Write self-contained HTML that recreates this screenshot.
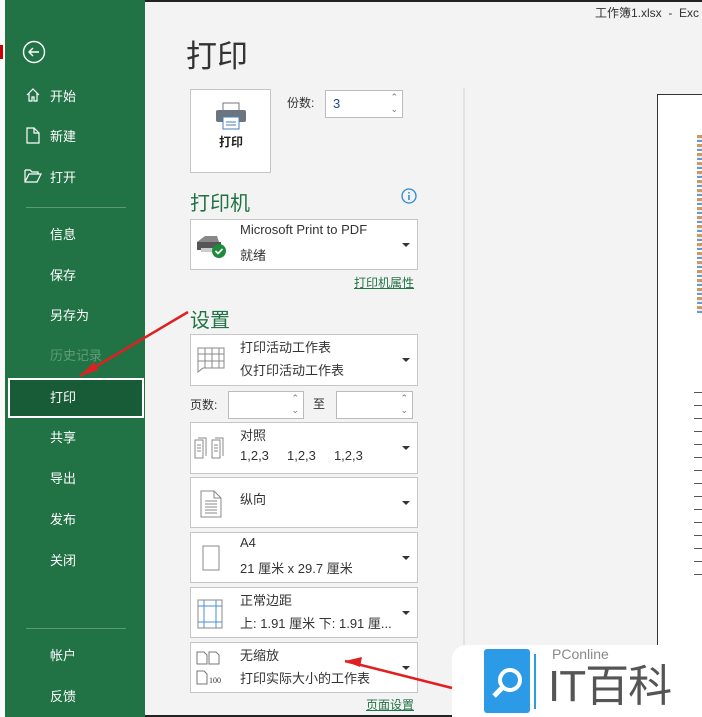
<!DOCTYPE html>
<html><head><meta charset="utf-8"><style>
*{margin:0;padding:0;box-sizing:border-box}
body{width:702px;height:717px;overflow:hidden;background:#f3f3f3;font-family:"Liberation Sans","Noto Sans CJK SC",sans-serif;position:relative;color:#333}
.a{position:absolute}
#side{left:5px;top:0;width:140px;height:717px;background:#217346}
.si{position:absolute;left:45px;color:#fff;font-size:13px}
.box{position:absolute;left:190px;width:228px;border:1px solid #c6c6c6;background:#fff}
.box .t1{position:absolute;left:49px;top:2px;font-size:13px;color:#333}
.box .t2{position:absolute;left:49px;top:25px;font-size:13px;color:#333}
.box .dd{position:absolute;right:7px;top:50%;margin-top:-2px;border-left:4px solid transparent;border-right:4px solid transparent;border-top:4px solid #333}
.gh{position:absolute;left:190px;color:#217346;font-size:20px}
.lk{position:absolute;color:#217346;font-size:12px;text-decoration:underline}
.sp{position:absolute;background:#fff;border:1px solid #bbb;height:28px}
.sp:after{content:"⌃\A⌄";white-space:pre;position:absolute;right:4px;top:0;font-size:9px;line-height:12px;color:#777}
</style></head><body>
<div class="a" style="left:0;top:0;width:702px;height:2px;background:#222"></div>
<div class="a" style="left:0;top:715px;width:702px;height:2px;background:#222"></div>
<div class="a" style="left:0;top:0;width:5px;height:717px;background:#fafafa"></div>
<div class="a" style="left:0;top:45px;width:3px;height:14px;background:#c00"></div>
<div id="side" class="a">
<svg class="a" style="left:17px;top:40px" width="24" height="24"><circle cx="12" cy="12" r="10.5" fill="none" stroke="#fff" stroke-width="1.4"/><path d="M17 12H7M11 8L7 12L11 16" fill="none" stroke="#fff" stroke-width="1.4"/></svg>
<svg class="a" style="left:20px;top:87px" width="16" height="16"><path d="M2 8L8 2L14 8M4 6V14H7V10H9V14H12V6" fill="none" stroke="#fff" stroke-width="1.2"/></svg>
<svg class="a" style="left:21px;top:127px" width="14" height="17"><path d="M1 1H8L13 6V16H1Z M8 1V6H13" fill="none" stroke="#fff" stroke-width="1.2"/></svg>
<svg class="a" style="left:19px;top:169px" width="18" height="14"><path d="M1 1H6L8 3H14V5M1 1V13H13L17 5H5L1 13" fill="none" stroke="#fff" stroke-width="1.2"/></svg>
<div class="si" style="top:86px">开始</div>
<div class="si" style="top:126px">新建</div>
<div class="si" style="top:167px">打开</div>
<div class="a" style="left:21px;top:207px;width:100px;height:1px;background:#5a9a75"></div>
<div class="si" style="top:224px">信息</div>
<div class="si" style="top:265px">保存</div>
<div class="si" style="top:305px">另存为</div>
<div class="si" style="top:345px;color:#5f9c78">历史记录</div>
<div class="a" style="left:3px;top:378px;width:136px;height:40px;background:#185c37;border:2px solid #fff"></div>
<div class="si" style="top:387px">打印</div>
<div class="si" style="top:427px">共享</div>
<div class="si" style="top:468px">导出</div>
<div class="si" style="top:509px">发布</div>
<div class="si" style="top:550px">关闭</div>
<div class="a" style="left:21px;top:628px;width:100px;height:1px;background:#5a9a75"></div>
<div class="si" style="top:645px">帐户</div>
<div class="si" style="top:686px">反馈</div>
</div>
<div class="a" style="left:186px;top:31px;font-size:31px;color:#333">打印</div>
<div class="a" style="left:190px;top:89px;width:81px;height:84px;background:#fff;border:1px solid #c6c6c6">
<svg class="a" style="left:24px;top:12px" width="32" height="28"><rect x="8" y="1" width="16" height="8" fill="#fff" stroke="#777"/><rect x="1" y="8" width="30" height="12" rx="2" fill="#6b7580"/><rect x="8" y="15" width="16" height="12" fill="#fff" stroke="#4a7ebb"/><path d="M11 20H21M11 23H21" stroke="#4a7ebb"/></svg>
<div class="a" style="left:28px;top:43px;font-size:12px;font-weight:bold;color:#222">打印</div></div>
<div class="a" style="left:287px;top:94px;font-size:12px">份数:</div>
<div class="sp" style="left:325px;top:90px;width:78px"><span style="position:absolute;left:7px;top:5px;font-size:13px;color:#1a4a8a">3</span></div>
<div class="gh" style="top:187px">打印机</div>
<svg class="a" style="left:401px;top:188px" width="16" height="16"><circle cx="8" cy="8" r="7" fill="none" stroke="#2b88d8" stroke-width="1.3"/><path d="M8 7V12M8 4V5.5" stroke="#2b88d8" stroke-width="1.5"/></svg>
<div class="box" style="top:219px;height:51px"><svg class="a" style="left:4px;top:14px" width="36" height="26"><path d="M2 8L10 2H22L24 8Z" fill="#888"/><rect x="2" y="8" width="24" height="8" fill="#555"/><rect x="6" y="14" width="12" height="4" fill="#ccc"/><circle cx="24" cy="17" r="7" fill="#1e8a3c"/><path d="M20.5 17L23 19.5L27.5 15" fill="none" stroke="#fff" stroke-width="1.6"/></svg>
<div class="t1">Microsoft Print to PDF</div><div class="t2">就绪</div><div class="dd"></div></div>
<div class="lk" style="left:354px;top:274px">打印机属性</div>
<div class="gh" style="top:304px">设置</div>
<div class="box" style="top:334px;height:52px"><svg class="a" style="left:6px;top:12px" width="28" height="26"><path d="M1 1H27V21H6L1 25Z M1 7H27M1 14H27M8 1V21M15 1V21M22 1V21" fill="none" stroke="#888"/></svg><div class="t1">打印活动工作表</div><div class="t2">仅打印活动工作表</div><div class="dd"></div></div>
<div class="a" style="left:190px;top:396px;font-size:12px">页数:</div>
<div class="sp" style="left:228px;top:391px;width:76px"></div>
<div class="a" style="left:313px;top:395px;font-size:12px">至</div>
<div class="sp" style="left:336px;top:391px;width:77px"></div>
<div class="box" style="top:422px;height:52px"><svg class="a" style="left:3px;top:14px" width="36" height="22"><path d="M1 3H9V21H1ZM4 1H12V19M18 3H26V21H18ZM21 1H29V19" fill="#fff" stroke="#888"/><path d="M3 8H7M3 11H7M3 14H7M20 8H24M20 11H24M20 14H24" stroke="#888"/></svg><div class="t1">对照</div><div class="t2">1,2,3&nbsp;&nbsp;&nbsp;&nbsp;&nbsp;1,2,3&nbsp;&nbsp;&nbsp;&nbsp;&nbsp;1,2,3</div><div class="dd"></div></div>
<div class="box" style="top:477px;height:51px"><svg class="a" style="left:9px;top:12px" width="22" height="28"><path d="M1 1H14L21 8V27H1Z M14 1V8H21 M5 11H17M5 14H17M5 17H17M5 20H17M5 23H17" fill="none" stroke="#888"/></svg><div class="t1" style="top:11px">纵向</div><div class="dd"></div></div>
<div class="box" style="top:532px;height:51px"><svg class="a" style="left:11px;top:12px" width="18" height="26"><rect x="1" y="1" width="16" height="24" fill="none" stroke="#888"/></svg><div class="t1">A4</div><div class="t2">21 厘米 x 29.7 厘米</div><div class="dd"></div></div>
<div class="box" style="top:587px;height:51px"><svg class="a" style="left:6px;top:11px" width="26" height="30"><rect x="1" y="1" width="24" height="28" fill="none" stroke="#888"/><path d="M1 7H25M1 23H25M7 1V29M19 1V29" stroke="#4a90d9"/></svg><div class="t1">正常边距</div><div class="t2">上: 1.91 厘米 下: 1.91 厘...</div><div class="dd"></div></div>
<div class="box" style="top:642px;height:51px"><svg class="a" style="left:5px;top:8px" width="36" height="36"><path d="M1 1H8L11 4V13H1Z M13 1H20L23 4V13H13Z M1 20H8L11 23V33H1Z" fill="none" stroke="#777"/><text x="13" y="32" font-size="8" font-family="Liberation Serif" fill="#333">100</text></svg><div class="t1">无缩放</div><div class="t2">打印实际大小的工作表</div><div class="dd"></div></div>
<div class="lk" style="left:366px;top:696px">页面设置</div>
<div class="a" style="left:463px;top:88px;width:2px;height:620px;background:#e2e2e2"></div>
<div class="a" style="left:595px;top:4px;font-size:12px;color:#333">工作簿1.xlsx &nbsp;- &nbsp;Exc</div>
<div class="a" style="left:657px;top:94px;width:45px;height:600px;background:#fff;border-left:1px solid #333;border-top:1px solid #333"></div>
<div class="a" style="left:697px;top:135px;width:5px;height:180px;background:repeating-linear-gradient(#c96 0 3px,#eee 3px 5px,#69c 5px 7px,#fff 7px 9px)"></div>
<div class="a" style="left:694px;top:380px;width:8px;height:200px;background:repeating-linear-gradient(#fff 0 12px,#555 12px 13px)"></div>
<div class="a" style="left:452px;top:645px;width:250px;height:72px;background:#fff;border-radius:14px 0 0 0"></div>
<div class="a" style="left:484px;top:649px;width:46px;height:64px;background:#2b9be8;border-radius:3px"></div>
<svg class="a" style="left:484px;top:649px" width="56" height="64"><circle cx="26" cy="31" r="10" fill="none" stroke="#fff" stroke-width="4"/><path d="M19 38L10 47" stroke="#fff" stroke-width="5"/><path d="M51 5V60" stroke="#2b9be8" stroke-width="2"/></svg>
<div class="a" style="left:552px;top:646px;font-size:14px;color:#888">PConline</div>
<div class="a" style="left:548px;top:662px;font-size:44px;line-height:50px;color:#555;letter-spacing:-1px">IT百科</div>
<svg class="a" style="left:0;top:0" width="702" height="717"><path d="M188 312L80 376" stroke="#e02020" stroke-width="2.5"/><path d="M80 376L94 362L98 370Z" fill="#e02020"/><path d="M452 688L345 661" stroke="#e02020" stroke-width="2.5"/><path d="M345 661L362 657L360 667Z" fill="#e02020"/></svg>
</body></html>
